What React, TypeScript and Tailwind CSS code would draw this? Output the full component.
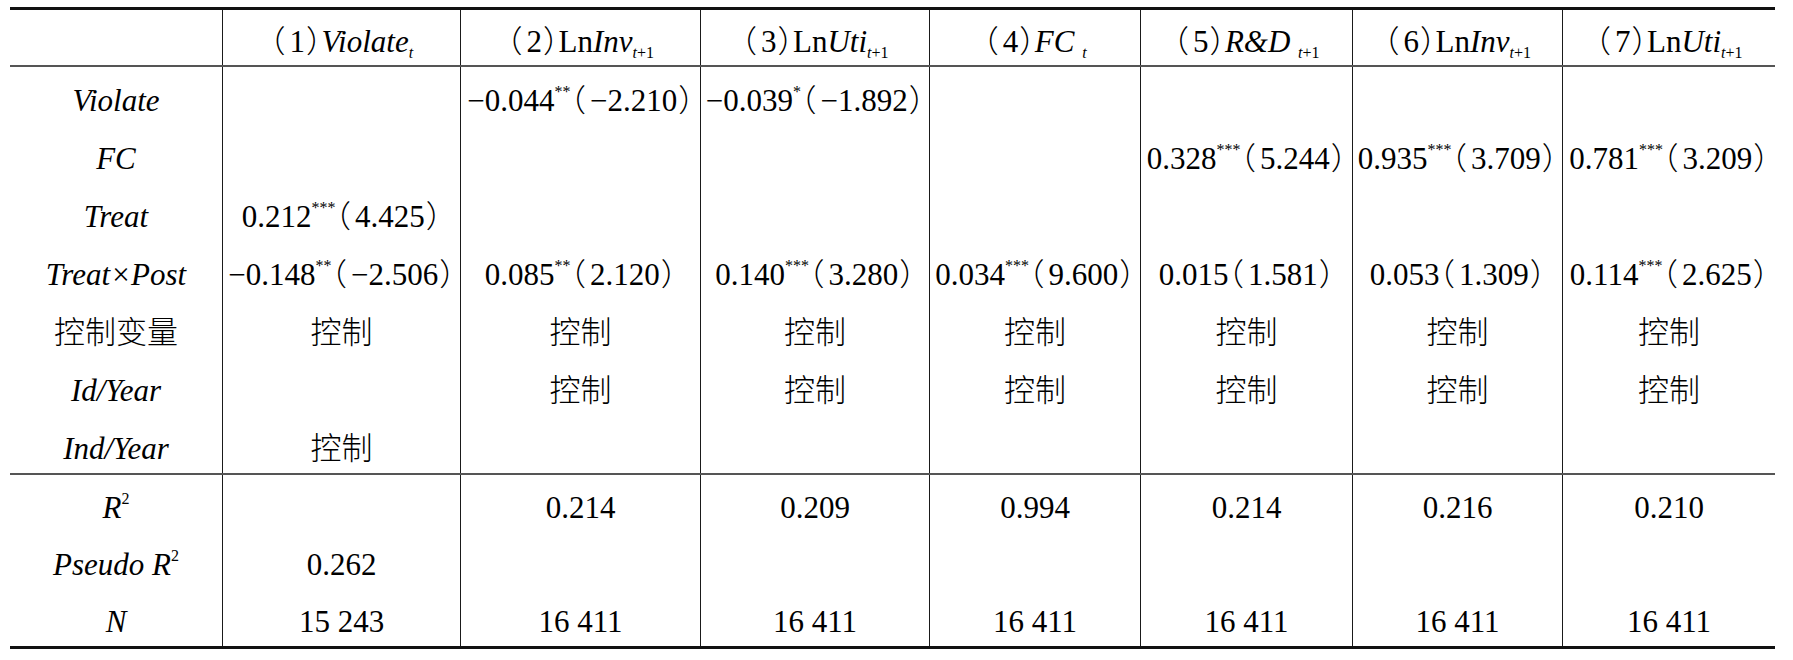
import React from 'react'
import clsx from 'clsx'

function Sup({ children }: { children: React.ReactNode }) {
  return <span className="text-[16px] leading-none align-[14px]">{children}</span>
}

function Sub({ children }: { children: React.ReactNode }) {
  return <span className="text-[16px] leading-none align-[-6px]">{children}</span>
}

// fullwidth brackets, squeezed like the source table
function L() {
  return <span className="mr-[4px] font-light [font-feature-settings:'halt']">（</span>
}
function R() {
  return <span className="ml-[1px] font-light [font-feature-settings:'halt']">）</span>
}

function Han({ children }: { children: React.ReactNode }) {
  return <span className="font-light">{children}</span>
}

function Coef({ v, s, t }: { v: string, s?: string, t: string }) {
  return (
    <>
      {v}
      {s ? <Sup>{s}</Sup> : null}
      <L />{t}<R />
    </>
  )
}

const grid = 'grid grid-cols-[212px_238px_240px_229px_211px_212px_210px_213px]'

function Cell({ children, first, className }: { children?: React.ReactNode, first?: boolean, className?: string }) {
  return (
    <div
      className={clsx(
        'flex items-center justify-center whitespace-nowrap',
        !first && 'border-l border-[#1a1a1a]',
        className,
      )}
    >
      <span>{children}</span>
    </div>
  )
}

const header: React.ReactNode[] = [
  <><L />1<R /><i>Violate</i><Sub><i>t</i></Sub></>,
  <><L />2<R />Ln<i>Inv</i><Sub><i>t</i>+1</Sub></>,
  <><L />3<R />Ln<i>Uti</i><Sub><i>t</i>+1</Sub></>,
  <><L />4<R /><i>FC </i><Sub><i>t</i></Sub></>,
  <><L />5<R /><i>R&amp;D </i><Sub><i>t</i>+1</Sub></>,
  <><L />6<R />Ln<i>Inv</i><Sub><i>t</i>+1</Sub></>,
  <><L />7<R />Ln<i>Uti</i><Sub><i>t</i>+1</Sub></>,
]

const ctrl = <Han>控制</Han>

const mainRows: { label: React.ReactNode, cells: React.ReactNode[] }[] = [
  {
    label: <i>Violate</i>,
    cells: ['', <Coef v="−0.044" s="**" t="−2.210" />, <Coef v="−0.039" s="*" t="−1.892" />, '', '', '', ''],
  },
  {
    label: <i>FC</i>,
    cells: ['', '', '', '', <Coef v="0.328" s="***" t="5.244" />, <Coef v="0.935" s="***" t="3.709" />, <Coef v="0.781" s="***" t="3.209" />],
  },
  {
    label: <i>Treat</i>,
    cells: [<Coef v="0.212" s="***" t="4.425" />, '', '', '', '', '', ''],
  },
  {
    label: <i>Treat×Post</i>,
    cells: [
      <Coef v="−0.148" s="**" t="−2.506" />,
      <Coef v="0.085" s="**" t="2.120" />,
      <Coef v="0.140" s="***" t="3.280" />,
      <Coef v="0.034" s="***" t="9.600" />,
      <Coef v="0.015" t="1.581" />,
      <Coef v="0.053" t="1.309" />,
      <Coef v="0.114" s="***" t="2.625" />,
    ],
  },
  {
    label: <Han>控制变量</Han>,
    cells: [ctrl, ctrl, ctrl, ctrl, ctrl, ctrl, ctrl],
  },
  {
    label: <i>Id/Year</i>,
    cells: ['', ctrl, ctrl, ctrl, ctrl, ctrl, ctrl],
  },
  {
    label: <i>Ind/Year</i>,
    cells: [ctrl, '', '', '', '', '', ''],
  },
]

const statRows: { label: React.ReactNode, cells: React.ReactNode[] }[] = [
  {
    label: <><i>R</i><Sup>2</Sup></>,
    cells: ['', '0.214', '0.209', '0.994', '0.214', '0.216', '0.210'],
  },
  {
    label: <><i>Pseudo R</i><Sup>2</Sup></>,
    cells: ['0.262', '', '', '', '', '', ''],
  },
  {
    label: <i>N</i>,
    cells: ['15 243', '16 411', '16 411', '16 411', '16 411', '16 411', '16 411'],
  },
]

export default function App() {
  return (
    <div className="min-h-[660px] w-full bg-white pl-[10px] pt-[7px] text-[31px] text-black font-[family-name:'Liberation_Serif','Noto_Sans_CJK_SC',serif]">
      <div className="w-[1765px] border-y-[3px] border-[#111]">
        {/* header */}
        <div className={clsx(grid, 'border-b-2 border-[#555]')}>
          <Cell first className="h-[55px] pt-[10px]" />
          {header.map((h, i) => (
            <Cell key={i} className="h-[55px] pt-[10px]">{h}</Cell>
          ))}
        </div>

        {/* coefficients */}
        <div className="border-b-2 border-[#555]">
          {mainRows.map((row, r) => (
            <div key={r} className={grid}>
              <Cell first className="h-[58px] pt-[10px]">{row.label}</Cell>
              {row.cells.map((c, i) => (
                <Cell key={i} className="h-[58px] pt-[10px]">{c}</Cell>
              ))}
            </div>
          ))}
        </div>

        {/* stats */}
        <div>
          {statRows.map((row, r) => (
            <div key={r} className={grid}>
              <Cell first className="h-[57px] pt-[10px]">{row.label}</Cell>
              {row.cells.map((c, i) => (
                <Cell key={i} className="h-[57px] pt-[10px]">{c}</Cell>
              ))}
            </div>
          ))}
        </div>
      </div>
    </div>
  )
}
